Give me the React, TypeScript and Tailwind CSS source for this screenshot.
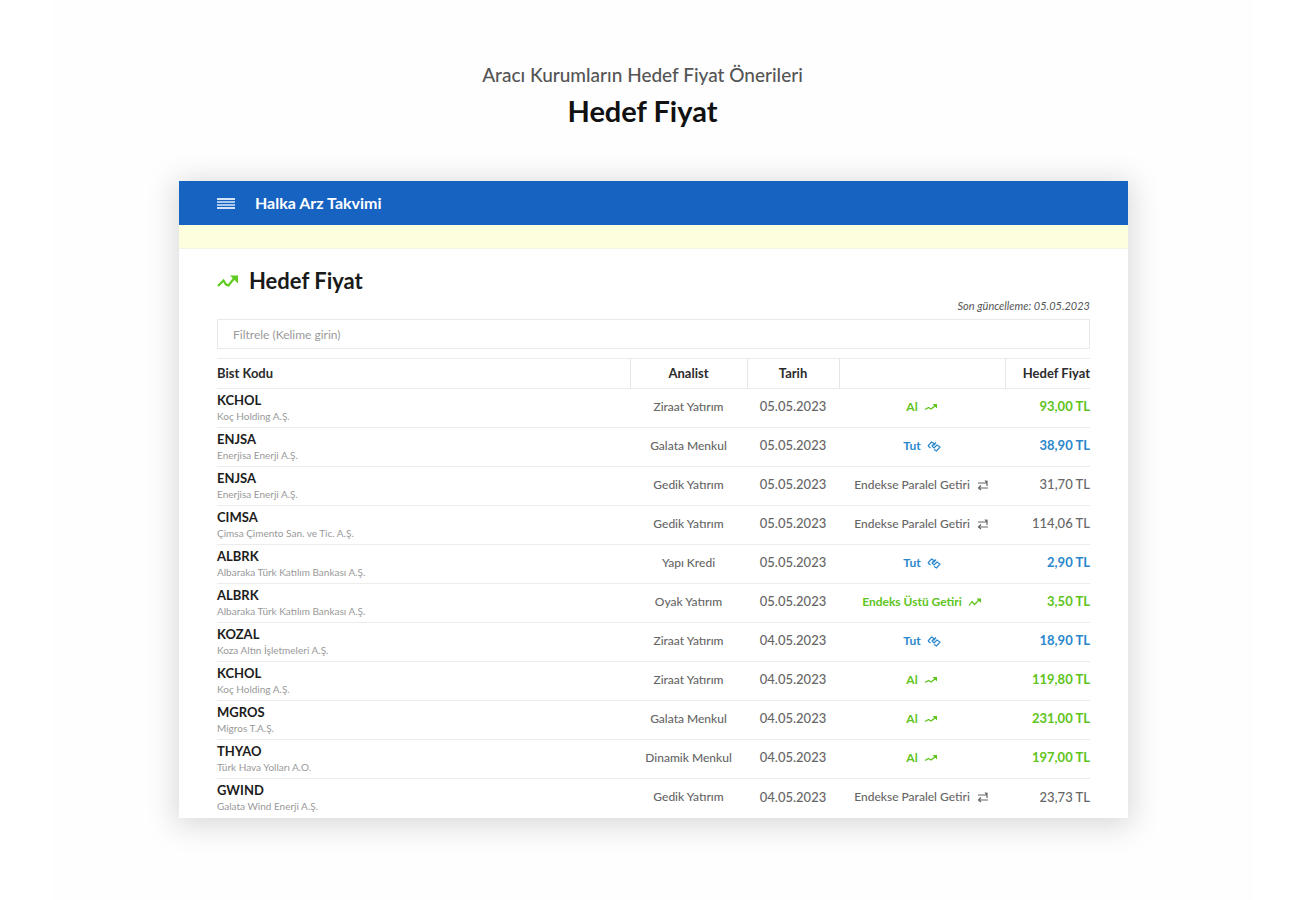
import React from "react";

type Tone = "buy" | "hold" | "neutral";
type IconName = "up" | "hold" | "swap" | "zigzag";

interface Row {
  code: string;
  company: string;
  analyst: string;
  date: string;
  advice: string;
  icon: IconName;
  tone: Tone;
  price: string;
}

const rows: Row[] = [
  { code: "KCHOL", company: "Koç Holding A.Ş.", analyst: "Ziraat Yatırım", date: "05.05.2023", advice: "Al", icon: "up", tone: "buy", price: "93,00 TL" },
  { code: "ENJSA", company: "Enerjisa Enerji A.Ş.", analyst: "Galata Menkul", date: "05.05.2023", advice: "Tut", icon: "hold", tone: "hold", price: "38,90 TL" },
  { code: "ENJSA", company: "Enerjisa Enerji A.Ş.", analyst: "Gedik Yatırım", date: "05.05.2023", advice: "Endekse Paralel Getiri", icon: "swap", tone: "neutral", price: "31,70 TL" },
  { code: "CIMSA", company: "Çimsa Çimento San. ve Tic. A.Ş.", analyst: "Gedik Yatırım", date: "05.05.2023", advice: "Endekse Paralel Getiri", icon: "swap", tone: "neutral", price: "114,06 TL" },
  { code: "ALBRK", company: "Albaraka Türk Katılım Bankası A.Ş.", analyst: "Yapı Kredi", date: "05.05.2023", advice: "Tut", icon: "hold", tone: "hold", price: "2,90 TL" },
  { code: "ALBRK", company: "Albaraka Türk Katılım Bankası A.Ş.", analyst: "Oyak Yatırım", date: "05.05.2023", advice: "Endeks Üstü Getiri", icon: "zigzag", tone: "buy", price: "3,50 TL" },
  { code: "KOZAL", company: "Koza Altın İşletmeleri A.Ş.", analyst: "Ziraat Yatırım", date: "04.05.2023", advice: "Tut", icon: "hold", tone: "hold", price: "18,90 TL" },
  { code: "KCHOL", company: "Koç Holding A.Ş.", analyst: "Ziraat Yatırım", date: "04.05.2023", advice: "Al", icon: "up", tone: "buy", price: "119,80 TL" },
  { code: "MGROS", company: "Migros T.A.Ş.", analyst: "Galata Menkul", date: "04.05.2023", advice: "Al", icon: "up", tone: "buy", price: "231,00 TL" },
  { code: "THYAO", company: "Türk Hava Yolları A.O.", analyst: "Dinamik Menkul", date: "04.05.2023", advice: "Al", icon: "up", tone: "buy", price: "197,00 TL" },
  { code: "GWIND", company: "Galata Wind Enerji A.Ş.", analyst: "Gedik Yatırım", date: "04.05.2023", advice: "Endekse Paralel Getiri", icon: "swap", tone: "neutral", price: "23,73 TL" },
];

const toneClass: Record<Tone, string> = {
  buy: "text-[#5ec41c] font-bold",
  hold: "text-[#2a87cc] font-bold",
  neutral: "text-[#666666] font-medium",
};

const iconPaths: Record<IconName, React.ReactNode> = {
  up: (
    <>
      <path d="M1 9.500l3.500-2 2.500 1.500L11 6" fill="none" stroke="currentColor" strokeWidth="1.400" />
      <path d="M8.500 4H13v4.500z" fill="currentColor" />
    </>
  ),
  zigzag: (
    <>
      <path d="M1 10.500l3-4 2.500 3L11 5" fill="none" stroke="currentColor" strokeWidth="1.200" />
      <path d="M8.500 3.500H13V8z" fill="currentColor" />
    </>
  ),
  hold: (
    <path
      d="M1 7l3.500-4 2.500 1.500L5 7l2 2 3-3 3 2-3.500 4-2.500-1.500M9 3.500L6.500 6.500M1 7l2.500 2"
      fill="none"
      stroke="currentColor"
      strokeWidth="1.200"
    />
  ),
  swap: (
    <path
      d="M2 5h9M9 2.500L11 5M11 2.500V8M12 10H3M5 7.500L2.500 10 5 12"
      fill="none"
      stroke="currentColor"
      strokeWidth="1.200"
    />
  ),
};

function AdviceIcon({ name }: { name: IconName }) {
  return (
    <svg viewBox="0 0 14 14" className="size-3.5 shrink-0" aria-hidden="true">
      {iconPaths[name]}
    </svg>
  );
}

function TargetTable() {
  return (
    <table className="mt-[9px] w-full table-fixed border-collapse text-xs">
      <colgroup>
        <col />
        <col className="w-[117px]" />
        <col className="w-[92px]" />
        <col className="w-[166px]" />
        <col className="w-[85px]" />
      </colgroup>
      <thead>
        <tr className="h-[30px] border-y border-[#ececec] text-[13px] leading-4 text-[#2b2b2b] [&>th]:pb-0.5">
          <th className="border-r border-[#e6e6e6] text-left font-bold">Bist Kodu</th>
          <th className="border-r border-[#e6e6e6] font-bold">Analist</th>
          <th className="border-r border-[#e6e6e6] font-bold">Tarih</th>
          <th className="border-r border-[#e6e6e6]" aria-label="Öneri" />
          <th className="whitespace-nowrap text-right font-bold">Hedef Fiyat</th>
        </tr>
      </thead>
      <tbody>
        {rows.map((row, i) => (
          <tr key={i} className="h-[39px] border-b border-[#ececec] last:border-0">
            <td className="text-left">
              <div className="text-[13px] leading-4 font-bold text-[#1c1c1c]">{row.code}</div>
              <div className="text-[10px] leading-4 text-[#999999]">{row.company}</div>
            </td>
            <td className="pb-0.5 text-center font-medium text-[#666666]">{row.analyst}</td>
            <td className="pb-0.5 text-center text-[13px] font-medium text-[#666666]">{row.date}</td>
            <td className={`pb-0.5 ${toneClass[row.tone]}`}>
              <div className="flex items-center justify-center gap-1.5 whitespace-nowrap">
                {row.advice}
                <AdviceIcon name={row.icon} />
              </div>
            </td>
            <td className={`pb-0.5 text-right text-[13px] whitespace-nowrap ${toneClass[row.tone]}`}>{row.price}</td>
          </tr>
        ))}
      </tbody>
    </table>
  );
}

export default function App() {
  return (
    <div className="min-h-screen bg-white px-[52px] font-['Lato','Open_Sans',sans-serif]">
      <main className="min-h-screen bg-[#fefefe] pt-[61px] pb-20 pl-0.5">
        <header className="pr-[22px] text-center">
          <p className="text-[19px] leading-7 font-medium text-[#555555]">Aracı Kurumların Hedef Fiyat Önerileri</p>
          <h1 className="mt-1 text-[29px] leading-9 font-bold text-[#111111]">Hedef Fiyat</h1>
        </header>

        <section className="mx-auto mt-[52px] max-w-[949px] bg-white shadow-[0_4px_28px_4px_rgba(0,0,0,0.15)]">
          <nav className="flex h-11 items-center gap-5 bg-[#1763c1] px-[38px] text-white">
            <button type="button" aria-label="Menü" className="flex w-[18px] flex-col gap-px">
              <span className="h-[2px] bg-[#d3e3f8]" />
              <span className="h-[2px] bg-[#a9c8ee]" />
              <span className="h-[2px] bg-[#a9c8ee]" />
              <span className="h-[2px] bg-[#d3e3f8]" />
            </button>
            <span className="text-base font-bold">Halka Arz Takvimi</span>
          </nav>
          <div className="h-6 border-b border-[#f3f3e6] bg-[#fdfedd]" />

          <div className="px-[38px] pt-4">
            <h2 className="flex items-center gap-2.5 text-[22px] leading-8 font-bold text-[#1a1a1a]">
              <svg viewBox="0 0 22 14" className="h-3.5 w-[22px] text-[#5ecb1f]" aria-hidden="true">
                <path d="M1 12l5.500-5.500 2.500 4 2.500 1 5.500-7" fill="none" stroke="currentColor" strokeWidth="2.200" />
                <path d="M13 1.500h8v8z" fill="currentColor" />
              </svg>
              Hedef Fiyat
            </h2>
            <p className="text-right text-[11px] leading-[18px] text-[#555555] italic">Son güncelleme: 05.05.2023</p>
            <input
              type="text"
              aria-label="Filtrele"
              placeholder="Filtrele (Kelime girin)"
              className="mt-1 block h-[30px] w-full border border-[#e9e9e9] bg-white px-[15px] text-xs text-[#555555] outline-none placeholder:text-[#9a9a9a]"
            />
            <TargetTable />
          </div>
        </section>
      </main>
    </div>
  );
}
